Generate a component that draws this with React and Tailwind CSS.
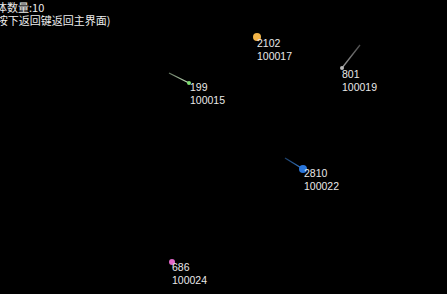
import React from "react";

const objects = [
  { name: "2102", id: "100017", x: 257, y: 37, r: 4, color: "#f3b548", tail: null },
  { name: "801", id: "100019", x: 342, y: 68, r: 2, color: "#b8b8b8", tail: [360, 45], tailColor: "#9a9a9a" },
  { name: "199", id: "100015", x: 189, y: 83, r: 2, color: "#7ee070", tail: [169, 73], tailColor: "#c8e8c0" },
  { name: "2810", id: "100022", x: 303, y: 169, r: 4, color: "#2a76dc", tail: [285, 158], tailColor: "#3a7fd0" },
  { name: "686", id: "100024", x: 172, y: 262, r: 3, color: "#e068c8", tail: null },
];

const labels = [
  { name: "2102", id: "100017", left: "left-[257px]", top: "top-[37px]" },
  { name: "801", id: "100019", left: "left-[342px]", top: "top-[68px]" },
  { name: "199", id: "100015", left: "left-[190px]", top: "top-[81px]" },
  { name: "2810", id: "100022", left: "left-[304px]", top: "top-[167px]" },
  { name: "686", id: "100024", left: "left-[172px]", top: "top-[261px]" },
];

export default function App() {
  return (
    <div className="relative w-[447px] h-[294px] overflow-hidden bg-black text-[#ececec]">
      {/* header text */}
      <div className="pt-[1px] text-[11px] leading-[13px] font-['Noto_Sans_CJK_SC',sans-serif] whitespace-nowrap">
        <div className="-ml-[15px]">物体数量:10</div>
        <div className="-ml-[7px]">(按下返回键返回主界面)</div>
      </div>

      {/* canvas */}
      <svg className="absolute inset-0" width="447" height="294">
        <defs>
          {objects.filter((o) => o.tail).map((o) => (
            <linearGradient
              key={o.id}
              id={"g" + o.id}
              gradientUnits="userSpaceOnUse"
              x1={o.tail[0]}
              y1={o.tail[1]}
              x2={o.x}
              y2={o.y}
            >
              <stop offset="0" stopColor={o.tailColor} stopOpacity="0.5" />
              <stop offset="1" stopColor={o.tailColor} stopOpacity="1" />
            </linearGradient>
          ))}
        </defs>
        {objects.map((o) => (
          <g key={o.id}>
            {o.tail && (
              <line
                x1={o.tail[0]}
                y1={o.tail[1]}
                x2={o.x}
                y2={o.y}
                stroke={"url(#g" + o.id + ")"}
                strokeWidth="1.3"
              />
            )}
            <circle cx={o.x} cy={o.y} r={o.r} fill={o.color} />
          </g>
        ))}
      </svg>

      {/* labels */}
      {labels.map((l) => (
        <div
          key={l.id}
          className={`absolute ${l.left} ${l.top} text-[10.5px] leading-[13px] font-['Liberation_Sans',Arial,sans-serif] text-[#e8e8e8]`}
        >
          <div>{l.name}</div>
          <div>{l.id}</div>
        </div>
      ))}
    </div>
  );
}
